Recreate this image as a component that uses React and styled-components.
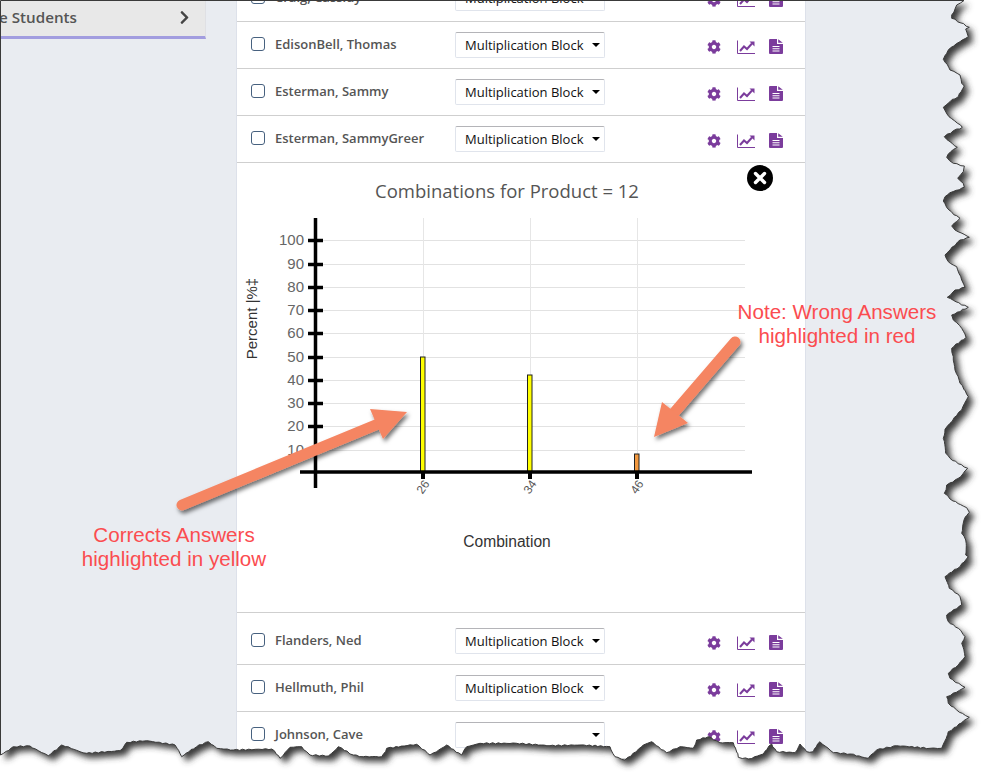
import React from "react";
import styled, { createGlobalStyle } from "styled-components";
import { FaCog, FaChevronRight } from "react-icons/fa";

const Global = createGlobalStyle`
  html, body { margin: 0; padding: 0; background: #fff; }
  * { box-sizing: border-box; }
`;

const Page = styled.div`
  position: relative;
  width: 991px;
  height: 783px;
  overflow: hidden;
  display: flex;
  align-items: flex-start;
  background: #e9ecf1;
  font-family: "Open Sans", sans-serif;
`;
const Sidebar = styled.aside`
  width: 236px;
  flex: none;
`;
const SideHeader = styled.div`
  width: 206px;
  height: 39px;
  overflow: hidden;
  display: flex;
  align-items: center;
  justify-content: flex-end;
  gap: 100px;
  padding: 0 13px 2px 0;
  background: #e8e8e8;
  border-bottom: 3px solid #a29ddf;
  border-right: 1px solid #dfe0e4;
  color: #555;
  font-size: 15.2px;
  font-weight: 600;
  white-space: nowrap;
  svg { flex: none; color: #444; font-size: 15px; }
`;
const List = styled.main`
  width: 570px;
  flex: none;
  margin-top: -25px;
  background: #fff;
  border-left: 1px solid #dde1ea;
  border-right: 1px solid #dde1ea;
`;
const Row = styled.div`
  display: flex;
  align-items: center;
  height: ${(p) => (p.$tall ? 52 : 47)}px;
  padding: ${(p) => (p.$tall ? 5 : 0)}px 0 0 14px;
  border-bottom: 1px solid #cfcfcf;
`;
const Check = styled.input.attrs({ type: "checkbox" })`
  appearance: none;
  flex: none;
  width: 14px;
  height: 14px;
  margin: 0 0 3px;
  border: 1.5px solid #47617f;
  border-radius: 3px;
  background: #fff;
`;
const Name = styled.span`
  width: 180px;
  flex: none;
  margin: 0 0 2px 10px;
  color: #555;
  font-size: 13px;
  font-weight: 600;
  white-space: nowrap;
`;
const SelectWrap = styled.div`
  position: relative;
  flex: none;
  width: 150px;
  height: 26px;
  &::after {
    content: "";
    position: absolute;
    right: 5px;
    top: 11px;
    border: 4px solid transparent;
    border-top: 4px solid #000;
    border-bottom: 0;
  }
`;
const Select = styled.select`
  appearance: none;
  display: block;
  width: 100%;
  height: 100%;
  padding: 0 0 0 9px;
  background: #fff;
  border: 1px solid #e0e4ec;
  border-top-color: #b4b4b8;
  border-radius: 2px;
  color: #111;
  font: 400 13px "Open Sans", sans-serif;
`;
const Actions = styled.div`
  display: flex;
  align-items: center;
  margin: 3px 0 0 102px;
  color: #7b3c9c;
`;
const Gear = styled(FaCog)`
  width: 14px;
  height: 14px;
  margin-right: 16px;
`;
const Glyph = styled.svg`
  display: block;
  flex: none;
  width: ${(p) => p.$w}px;
  height: ${(p) => p.$h}px;
  margin-right: ${(p) => p.$gap || 0}px;
`;
const ChartPanel = styled.section`
  position: relative;
  height: 450px;
  padding-top: 16px;
  border-bottom: 1px solid #cfcfcf;
`;
const ChartTitle = styled.h2`
  margin: 0;
  padding-right: 28px;
  height: 24px;
  line-height: 24px;
  text-align: center;
  color: #555;
  font-size: 18.5px;
  font-weight: 400;
`;
const Chart = styled.svg`
  display: block;
  width: 568px;
  height: 409px;
  font-family: "Liberation Sans", sans-serif;
`;
const CloseButton = styled.button`
  position: absolute;
  left: 510px;
  top: 2px;
  width: 26px;
  height: 26px;
  padding: 0;
  display: flex;
  align-items: center;
  justify-content: center;
  border: 0;
  border-radius: 50%;
  background: #000;
`;
const Overlay = styled.svg`
  position: absolute;
  left: 0;
  top: 0;
  width: 991px;
  height: 783px;
  pointer-events: none;
`;
const Note = styled.div`
  position: absolute;
  left: ${(p) => p.$x}px;
  top: ${(p) => p.$y}px;
  width: 280px;
  margin-left: -140px;
  text-align: center;
  color: #fb4c50;
  font: 400 20.6px/24px "Liberation Sans", sans-serif;
`;

const map = (ox, oy, list) => {
  const out = [];
  for (let i = 0; i < list.length; i += 2) out.push([ox + list[i] / 3, oy + list[i + 1] / 3]);
  return out;
};
const edgeRaw = [
  [964, 0.5],
  ...map(780, 0, [530,15,515,45,515,55,540,68,568,82,557,87,565,110,540,125,505,150,490,178,510,210,540,225,545,250,553,258,535,290,510,305,490,322,507,350,547,382,520,392,493,410,510,425,532,442,512,455,500,472,520,490,553,498,550,515,533,535,550,550,553,562,510,578,495,590,490,603,507,630,540,655,515,678,525,690,568,712,540,720,510,750]),
  ...map(900, 250, [135,15,145,35,170,50,185,90,195,112,165,120,142,142,205,172,155,195,160,210,185,235,198,262,155,295,160,320,165,360,180,400,205,440,185,480,150,520,135,538]),
  ...map(900, 425, [130,40,137,85,150,100,203,130,182,155,140,180,133,205,150,222,200,248,208,262,192,285,185,325,197,345,197,390,205,395,180,425,135,455,148,490,180,515,185,540]),
  ...map(500, 600, [1340,45,1345,65,1375,85,1395,110,1385,130,1395,170,1375,195,1345,220,1350,235,1395,262,1340,290,1345,310,1370,330,1408,352,1345,395,1325,445,1290,445,1190,437,1130,450,1105,475,1050,462,1000,458,960,425,940,455,920,455,900,432,885,458,830,455,815,432,790,462,745,477,715,472,700,428,660,428,625,410,590,420,580,445,540,440,500,458,455,425,430,435,375,480,345,470,330,440,240,435,150,437,50,430]),
  ...map(0, 690, [1440,160,1400,170,1385,195,1340,165,1290,195,1250,163,1160,175,1145,200,1090,200,1060,195,1015,170,985,198,930,195,905,170,870,172,840,205,815,177,700,180,650,175,625,155,590,170,545,200,525,165,440,152,380,157,360,182,260,190,240,185,185,165,145,197,90,168,40,170]),
  [0.5, 755],
];
const rough = (pts) => {
  const out = [];
  let n = 0;
  pts.forEach((p, i) => {
    const q = pts[i + 1];
    out.push(p);
    if (!q) return;
    const len = Math.hypot(q[0] - p[0], q[1] - p[1]);
    const steps = Math.floor(len / 3);
    for (let s = 1; s < steps; s++) {
      n += 1;
      const t = s / steps;
      const a = Math.sin(n * 12.9898) * 0.6;
      const b = Math.sin(n * 78.233) * 0.6;
      out.push([p[0] + (q[0] - p[0]) * t + a, p[1] + (q[1] - p[1]) * t + b]);
    }
  });
  return out;
};
const toD = (pts) => "M" + pts.map((p) => `${p[0].toFixed(1)} ${p[1].toFixed(1)}`).join("L");
const edge = toD(rough(edgeRaw));
const contentPath = `${edge}L0.5 0.5Z`;
const outsidePath = `M0 0H991V783H0Z ${contentPath}`;

const students = [
  { name: "Craig, Cassidy" },
  { name: "EdisonBell, Thomas" },
  { name: "Esterman, Sammy" },
  { name: "Esterman, SammyGreer" },
  { chart: true },
  { name: "Flanders, Ned", tall: true },
  { name: "Hellmuth, Phil" },
  { name: "Johnson, Cave", blank: true },
];

const yTicks = [
  [100, 240.5], [90, 264.5], [80, 287.5], [70, 310.5], [60, 333.5],
  [50, 357.5], [40, 380.5], [30, 403.5], [20, 426.5], [10, 450.5],
];
const bars = [
  { label: "26", x: 423, top: 357, fill: "#ffff00" },
  { label: "34", x: 530, top: 375, fill: "#ffff00" },
  { label: "46", x: 637, top: 454, fill: "#f3993f" },
];

function ProductChart() {
  return (
    <Chart viewBox="237 203 568 409">
      {yTicks.map(([v, y]) => (
        <g key={v}>
          <line x1="323" x2="745" y1={y} y2={y} stroke="#e2e2e2" />
          <line x1="308" x2="323" y1={y} y2={y} stroke="#000" strokeWidth="3.5" />
          <text x="304" y={y + 4.5} textAnchor="end" fontSize="15" fill="#666">{v}</text>
        </g>
      ))}
      {bars.map((b) => (
        <g key={b.label}>
          <line x1={b.x + 0.5} x2={b.x + 0.5} y1="218" y2="472" stroke="#e6e6e6" />
          <rect x={b.x - 2.5} y={b.top} width="4.5" height={472 - b.top} fill={b.fill} stroke="#222" />
          <line x1={b.x} x2={b.x} y1="472" y2="479" stroke="#000" strokeWidth="4" />
          <text
            x={b.x}
            y={491}
            textAnchor="middle"
            fontSize="12"
            fill="#555"
            transform={`rotate(-55 ${b.x} 487)`}
          >
            {b.label}
          </text>
        </g>
      ))}
      <line x1="315.5" x2="315.5" y1="218" y2="488" stroke="#000" strokeWidth="3.5" />
      <line x1="300" x2="752" y1="472" y2="472" stroke="#000" strokeWidth="3.5" />
      <text x="257" y="318.5" textAnchor="middle" fontSize="15" fill="#333" transform="rotate(-90 257 318.5)">
        Percent |%‡
      </text>
      <text x="507" y="547" textAnchor="middle" fontSize="15.6" fill="#333">Combination</text>
    </Chart>
  );
}

const TrendIcon = () => (
  <Glyph $w={18} $h={14} $gap={14} viewBox="0 0 18 14">
    <path d="M0.5 0.5V13.5H18" fill="none" stroke="currentColor" />
    <path d="M3 11L7 6.5L10 9L15 3.5" fill="none" stroke="currentColor" strokeWidth="2" />
    <path d="M12.5 1.5H17.5V6.5Z" fill="currentColor" />
  </Glyph>
);
const FileIcon = () => (
  <Glyph $w={14} $h={15} viewBox="0 0 14 15">
    <path
      fillRule="evenodd"
      fill="currentColor"
      d="M0 1A1 1 0 0 1 1 0H8V5H14V14A1 1 0 0 1 13 15H1A1 1 0 0 1 0 14ZM3.5 7V8H10.5V7ZM3.5 9.2V10.2H10.5V9.2ZM3.5 11.4V12.4H10.5V11.4ZM9.2 0.2L13.8 3.8H9.2Z"
    />
  </Glyph>
);

export default function App() {
  return (
    <Page>
      <Global />
      <Sidebar>
        <SideHeader>
          <span>Manage Students</span>
          <FaChevronRight />
        </SideHeader>
      </Sidebar>
      <List>
        {students.map((s, i) =>
          s.chart ? (
            <ChartPanel key={i}>
              <ChartTitle>Combinations for Product = 12</ChartTitle>
              <ProductChart />
              <CloseButton aria-label="Close">
                <svg width="14" height="14" viewBox="0 0 14 14">
                  <path d="M2.5 2.5L11.5 11.5M11.5 2.5L2.5 11.5" stroke="#fff" strokeWidth="3.4" strokeLinecap="round" />
                </svg>
              </CloseButton>
            </ChartPanel>
          ) : (
            <Row key={i} $tall={s.tall}>
              <Check />
              <Name>{s.name}</Name>
              <SelectWrap>
                <Select defaultValue={s.blank ? "" : "mb"}>
                  <option value=""></option>
                  <option value="mb">Multiplication Block</option>
                </Select>
              </SelectWrap>
              <Actions>
                <Gear />
                <TrendIcon />
                <FileIcon />
              </Actions>
            </Row>
          )
        )}
      </List>
      <Overlay viewBox="0 0 991 783">
        <defs>
          <filter id="arrowShadow" x="-20%" y="-20%" width="140%" height="140%">
            <feDropShadow dx="2" dy="3" stdDeviation="2" floodColor="#000" floodOpacity="0.55" />
          </filter>
          <filter id="tearBlur" x="-5%" y="-5%" width="110%" height="110%">
            <feGaussianBlur stdDeviation="3" />
          </filter>
          <clipPath id="outside">
            <path d={outsidePath} clipRule="evenodd" />
          </clipPath>
        </defs>
        <g filter="url(#arrowShadow)" fill="#f58562">
          <line x1="182" y1="505" x2="378" y2="424" stroke="#f58562" strokeWidth="11" strokeLinecap="round" />
          <polygon points="370,409 407,412 383,439" />
          <line x1="735" y1="342" x2="673" y2="414" stroke="#f58562" strokeWidth="11" strokeLinecap="round" />
          <polygon points="654,437 662,402 688,423" />
        </g>
        <path d={outsidePath} fill="#fff" fillRule="evenodd" />
        <g clipPath="url(#outside)">
          <path d={contentPath} fill="#3a3a3a" filter="url(#tearBlur)" transform="translate(5 5)" />
        </g>
        <path d={contentPath} fill="none" stroke="#3a3a3a" strokeWidth="1" />
      </Overlay>
      <Note $x={174} $y={523}>Corrects Answers<br />highlighted in yellow</Note>
      <Note $x={837} $y={300}>Note: Wrong Answers<br />highlighted in red</Note>
    </Page>
  );
}
